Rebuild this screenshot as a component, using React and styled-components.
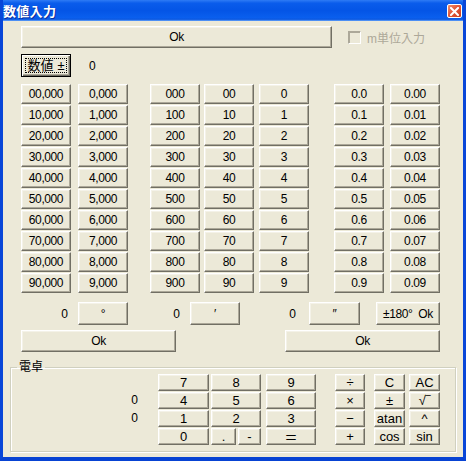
import React from "react";
import styled, { createGlobalStyle } from "styled-components";

const Global = createGlobalStyle`
  html, body { margin: 0; padding: 0; background: #ECE9D8; }
  * { box-sizing: border-box; }
`;

const FONT = `"Liberation Sans", "Noto Sans CJK JP", sans-serif`;

const Window = styled.div`
  width: 466px;
  height: 461px;
  background: #ECE9D8;
  border-left: 3px solid #0846D8;
  border-right: 3px solid #0846D8;
  border-bottom: 4px solid #0843D3;
  display: flex;
  flex-direction: column;
  font: 12px ${FONT};
  color: #000;
  overflow: hidden;
`;

const TitleBar = styled.div`
  height: 21px;
  margin: 0 -3px;
  padding: 0 4px 0 3px;
  display: flex;
  align-items: center;
  justify-content: space-between;
  background: linear-gradient(
    to bottom,
    #2E7BF5 0%,
    #0A5CEB 15%,
    #0455E6 50%,
    #0A5FEE 85%,
    #0B57E0 92%,
    #3F86F3 96%,
    #5F9CF5 100%
  );
`;

const Title = styled.span`
  color: #fff;
  font: bold 13px "Noto Sans CJK JP", sans-serif;
  letter-spacing: 0.3px;
  text-shadow: 1px 1px 0 #0A2FA0;
  line-height: 21px;
`;

const CloseBtn = styled.div`
  width: 15px;
  height: 14px;
  margin-top: 1px;
  border: 1px solid #fff;
  border-radius: 2px;
  background: linear-gradient(135deg, #F0906C 0%, #E2583A 45%, #C9401F 100%);
  display: flex;
  align-items: center;
  justify-content: center;
`;

const Client = styled.div`
  flex: 1;
  display: flex;
  flex-direction: column;
  padding: 0 7px;
`;

const Upper = styled.div`
  display: flex;
  flex-direction: column;
  padding-left: 11px;
`;

const Row = styled.div`
  display: flex;
  align-items: center;
  margin-top: ${(p) => p.$mt || 0}px;
`;

const Btn = styled.button`
  width: ${(p) => p.$w}px;
  height: ${(p) => p.$h || 20}px;
  margin: 0 0 0 ${(p) => p.$ml || 0}px;
  padding: 0;
  flex: none;
  background: #ECE9D8;
  border: 1px solid;
  border-color: #FFFFFF #716F64 #716F64 #FFFFFF;
  box-shadow: inset -1px -1px #ACA899, inset 1px 1px #F4F2E8;
  font: 12px ${FONT};
  letter-spacing: -0.4px;
  color: #000;
  display: flex;
  align-items: center;
  justify-content: center;
  cursor: default;
`;

const DefaultBtn = styled.button`
  width: 50px;
  height: 23px;
  margin: 0;
  padding: 3px;
  background: #ECE9D8;
  border: 1px solid #000;
  box-shadow: inset 1px 1px #fff, inset -1px -1px #716F64,
    inset -2px -2px #ACA899;
  font: 13px ${FONT};
  color: #000;
  display: flex;
  cursor: default;
`;

const Focus = styled.span`
  flex: 1;
  border: 1px dotted #000;
  display: flex;
  align-items: center;
  justify-content: center;
  gap: 4px;
  line-height: 1;
`;

const Value = styled.span`
  width: ${(p) => p.$w}px;
  text-align: ${(p) => p.$align || "left"};
  padding-left: ${(p) => p.$pl || 0}px;
  flex: none;
`;

const CheckBox = styled.span`
  width: 13px;
  height: 13px;
  margin-left: 16px;
  border: 1px solid;
  border-color: #ACA899 #fff #fff #ACA899;
  box-shadow: inset 1px 1px #ACA899;
  background: #ECE9D8;
  flex: none;
`;

const CheckLabel = styled.span`
  margin-left: 6px;
  color: #ACA899;
  font: 12px ${FONT};
`;

const KeyGrid = styled.div`
  display: flex;
  margin-top: 7px;
`;

const KeyColumn = styled.div`
  display: flex;
  flex-direction: column;
  gap: 1px;
  margin-left: ${(p) => p.$ml || 0}px;
`;

const Group = styled.fieldset`
  margin: 9px 0 0 0;
  padding: 0 0 6px 0;
  border: 1px solid #D0D0BF;
  box-shadow: inset 1px 1px #fff, 1px 1px #fff;
  min-width: 0;
`;

const Legend = styled.legend`
  margin-left: 6px;
  padding: 0 2px;
  height: 13px;
  font: 12px ${FONT};
  line-height: 13px;
  display: flex;
  align-items: center;
`;

const CalcGrid = styled.div`
  display: grid;
  grid-template-columns: 127px 20px 51px 2px 25px 2px 23px 5px 50px 19px 30px 9px 31px 4px 31px;
  grid-auto-rows: 17px;
  row-gap: 1px;
`;

const CalcKey = styled(Btn)`
  width: auto;
  height: 17px;
  margin: 0;
  grid-column: ${(p) => p.$col};
  grid-row: ${(p) => p.$row};
  font: 13px ${FONT};
  letter-spacing: 0;
`;

const CalcValue = styled.span`
  grid-column: 1;
  grid-row: ${(p) => p.$row};
  text-align: right;
  line-height: 17px;
`;

const cols = [
  { ml: 0, keys: ["00,000", "10,000", "20,000", "30,000", "40,000", "50,000", "60,000", "70,000", "80,000", "90,000"] },
  { ml: 7, keys: ["0,000", "1,000", "2,000", "3,000", "4,000", "5,000", "6,000", "7,000", "8,000", "9,000"] },
  { ml: 22, keys: ["000", "100", "200", "300", "400", "500", "600", "700", "800", "900"] },
  { ml: 4, keys: ["00", "10", "20", "30", "40", "50", "60", "70", "80", "90"] },
  { ml: 5, keys: ["0", "1", "2", "3", "4", "5", "6", "7", "8", "9"] },
  { ml: 25, keys: ["0.0", "0.1", "0.2", "0.3", "0.4", "0.5", "0.6", "0.7", "0.8", "0.9"] },
  { ml: 6, keys: ["0.00", "0.01", "0.02", "0.03", "0.04", "0.05", "0.06", "0.07", "0.08", "0.09"] },
];

// [label, column(track start / span), row]
const calcKeys = [
  ["7", "3", 1], ["8", "5 / span 3", 1], ["9", "9", 1], ["÷", "11", 1], ["C", "13", 1], ["AC", "15", 1],
  ["4", "3", 2], ["5", "5 / span 3", 2], ["6", "9", 2], ["×", "11", 2], ["±", "13", 2], ["√‾", "15", 2],
  ["1", "3", 3], ["2", "5 / span 3", 3], ["3", "9", 3], ["−", "11", 3], ["atan", "13", 3], ["^", "15", 3],
  ["0", "3", 4], [".", "5", 4], ["-", "7", 4], ["＝", "9", 4], ["+", "11", 4], ["cos", "13", 4], ["sin", "15", 4],
];

const SmallText = styled.span`
  font: 12px ${FONT};
  letter-spacing: -0.4px;
`;

export default function App() {
  return (
    <>
      <Global />
      <Window>
        <TitleBar>
          <Title>数値入力</Title>
          <CloseBtn>
            <svg width="9" height="9" viewBox="0 0 9 9">
              <path d="M1 1 L8 8 M8 1 L1 8" stroke="#fff" strokeWidth="2" strokeLinecap="square" />
            </svg>
          </CloseBtn>
        </TitleBar>
        <Client>
          <Upper>
            <Row $mt={5}>
              <Btn $w={311} $h={22}>Ok</Btn>
              <CheckBox />
              <CheckLabel>m単位入力</CheckLabel>
            </Row>
            <Row $mt={6}>
              <DefaultBtn>
                <Focus>
                  <span>数値</span>
                  <span>±</span>
                </Focus>
              </DefaultBtn>
              <Value $w={30} $pl={18}>0</Value>
            </Row>
            <KeyGrid>
              {cols.map((c, i) => (
                <KeyColumn key={i} $ml={c.ml}>
                  {c.keys.map((k) => (
                    <Btn key={k} $w={50}>{k}</Btn>
                  ))}
                </KeyColumn>
              ))}
            </KeyGrid>
            <Row $mt={9}>
              <Value $w={47} $align="right">0</Value>
              <Btn $w={50} $h={23} $ml={10}>°</Btn>
              <Value $w={52} $align="right">0</Value>
              <Btn $w={50} $h={23} $ml={10}>′</Btn>
              <Value $w={56} $align="right">0</Value>
              <Btn $w={51} $h={23} $ml={13}>″</Btn>
              <Btn $w={64} $h={23} $ml={16}>
                <SmallText>±180°&nbsp; Ok</SmallText>
              </Btn>
            </Row>
            <Row $mt={5}>
              <Btn $w={155} $h={22}>Ok</Btn>
              <Btn $w={155} $h={22} $ml={109}>Ok</Btn>
            </Row>
          </Upper>
          <Group>
            <Legend>電卓</Legend>
            <CalcGrid>
              <CalcValue $row={2}>0</CalcValue>
              <CalcValue $row={3}>0</CalcValue>
              {calcKeys.map(([label, col, row]) => (
                <CalcKey key={label + row} $col={col} $row={row}>
                  {label}
                </CalcKey>
              ))}
            </CalcGrid>
          </Group>
        </Client>
      </Window>
    </>
  );
}
